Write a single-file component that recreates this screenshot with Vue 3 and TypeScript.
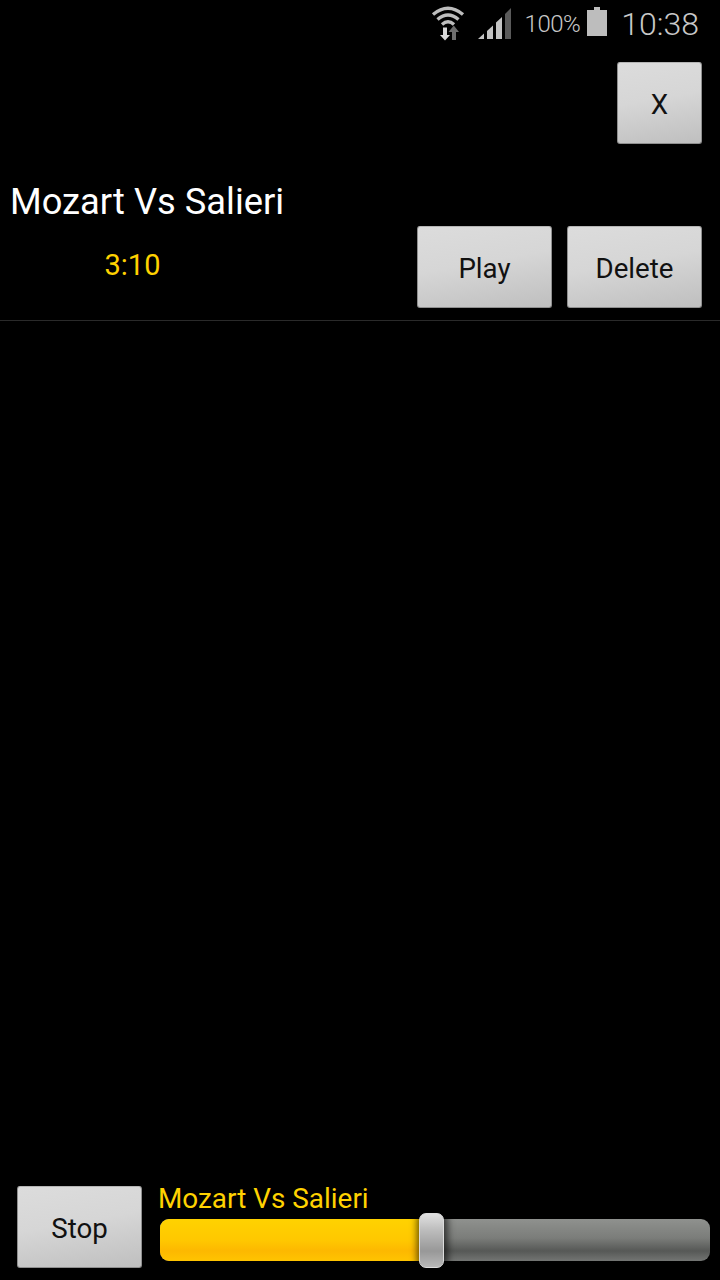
<script setup lang="ts">
const title = 'Mozart Vs Salieri'
const duration = '3:10'
const progress = 271 / 550 * 100
</script>

<template>
  <div class="screen">
    <header class="status">
      <svg class="wifi" width="36" height="36" viewBox="430 5 36 36" aria-hidden="true">
        <g fill="none" stroke="#bdbdbd" stroke-width="3.4">
          <path d="M433 14.5 Q448 2 463 14.5" />
          <path d="M437.5 19.5 Q448 10.500 458.500 19.5" />
          <path d="M442 24.500 Q448 19 454 24.500" />
        </g>
        <path d="M453.800 25.500 L459 32 H456 V40 H452 V32 H448.500 Z" fill="#6e6e6e" />
        <path d="M443 27.500 H447 V35 H450 L445 40.500 L440 35 H443 Z" fill="#d8d8d8" />
      </svg>
      <svg class="signal" width="34" height="32" viewBox="478 8 34 32" aria-hidden="true">
        <polygon points="478,39 484,33.500 484,39" fill="#c4c4c4" />
        <polygon points="487,31 493,25.500 493,39 487,39" fill="#c4c4c4" />
        <polygon points="496,22.500 502,17 502,39 496,39" fill="#c4c4c4" />
        <polygon points="505,14 511,8 511,39 505,39" fill="#5a5a5a" />
      </svg>
      <span class="battery-text">100%</span>
      <svg class="battery" width="20" height="30" viewBox="587 7 20 30" aria-hidden="true">
        <path d="M594 7 H600 V10 H607 V36 H587 V10 H594 Z" fill="#bdbdbd" />
      </svg>
      <span class="clock">10:38</span>
    </header>

    <div class="close-row">
      <button class="btn close" type="button">X</button>
    </div>

    <section class="item">
      <div class="item-title">{{ title }}</div>
      <div class="item-row">
        <div class="item-time">{{ duration }}</div>
        <div class="item-actions">
          <button class="btn action" type="button">Play</button>
          <button class="btn action" type="button">Delete</button>
        </div>
      </div>
    </section>

    <footer class="player">
      <button class="btn stop" type="button">Stop</button>
      <div class="now">
        <div class="now-title">{{ title }}</div>
        <div class="track">
          <div class="fill" :style="{ width: progress + '%' }"></div>
          <div class="thumb" :style="{ left: progress + '%' }"></div>
        </div>
      </div>
    </footer>
  </div>
</template>

<style>
html, body { background: #000; }
</style>

<style scoped>
.screen {
  width: 720px;
  height: 1280px;
  background: #000;
  display: flex;
  flex-direction: column;
  font-family: Roboto, "Liberation Sans", sans-serif;
  overflow: hidden;
}
.status {
  height: 50px;
  flex: none;
  display: flex;
  align-items: flex-start;
  justify-content: flex-end;
  padding-right: 21px;
  box-sizing: border-box;
  color: #c8c8c8;
}
.wifi { margin-top: 5px; }
.signal { margin-top: 8px; margin-left: 12px; }
.battery-text {
  margin-left: 13px;
  margin-right: 7px;
  font-size: 24px;
  font-weight: 300;
  line-height: 48px;
  letter-spacing: -0.5px;
}
.battery { margin-top: 7px; }
.clock {
  margin-left: 14px;
  font-size: 32px;
  font-weight: 300;
  line-height: 48px;
}
.close-row {
  display: flex;
  justify-content: flex-end;
  padding: 12px 18px 0 0;
}
.btn {
  box-sizing: border-box;
  height: 82px;
  padding: 3px 0 0;
  border: 1px solid #8f8f8f;
  border-top-color: #b5b5b5;
  border-radius: 3px;
  background: linear-gradient(170deg, #dcdcdc 0%, #d6d6d6 45%, #bfbfbf 100%);
  color: #111;
  font-family: inherit;
  font-size: 27.7px;
}
.close { width: 85px; }
.item {
  border-bottom: 1px solid #2a2a2a;
  padding: 36px 18px 12px 0;
}
.item-title {
  padding-left: 10px;
  font-size: 36.3px;
  line-height: 44px;
  color: #fff;
}
.item-row {
  display: flex;
  justify-content: space-between;
  margin-top: 2px;
}
.item-time {
  width: 265px;
  text-align: center;
  font-size: 29px;
  line-height: 78px;
  color: #ffd200;
}
.item-actions {
  display: flex;
  gap: 15px;
}
.action { width: 135px; }
.player {
  margin-top: auto;
  display: flex;
  align-items: flex-start;
  padding: 0 10px 12px 17px;
}
.stop { width: 125px; flex: none; }
.now {
  flex: 1;
  margin-left: 16px;
  min-width: 0;
}
.now-title {
  font-size: 27.9px;
  line-height: 26px;
  color: #ffd200;
}
.track {
  position: relative;
  height: 42px;
  margin-top: 7px;
  margin-left: 2px;
  border-radius: 9px;
  background: linear-gradient(180deg, #8f918e 0%, #7b7d7a 45%, #565856 76%, #737573 100%);
}
.fill {
  height: 100%;
  border-radius: 9px 0 0 9px;
  background: linear-gradient(180deg, #ffd200 0%, #ffc800 50%, #fdb800 76%, #ffc400 100%);
}
.thumb {
  position: absolute;
  top: -6px;
  width: 25px;
  height: 55px;
  margin-left: -12px;
  box-sizing: border-box;
  border-radius: 7px;
  border: 1px solid #dcdcdc;
  background: linear-gradient(180deg, #e0e0e0 0%, #bdbdbd 30%, #989898 70%, #b8b8b8 100%);
  box-shadow: 1px 0 7px 3px rgba(0, 0, 0, 0.6);
}
</style>
